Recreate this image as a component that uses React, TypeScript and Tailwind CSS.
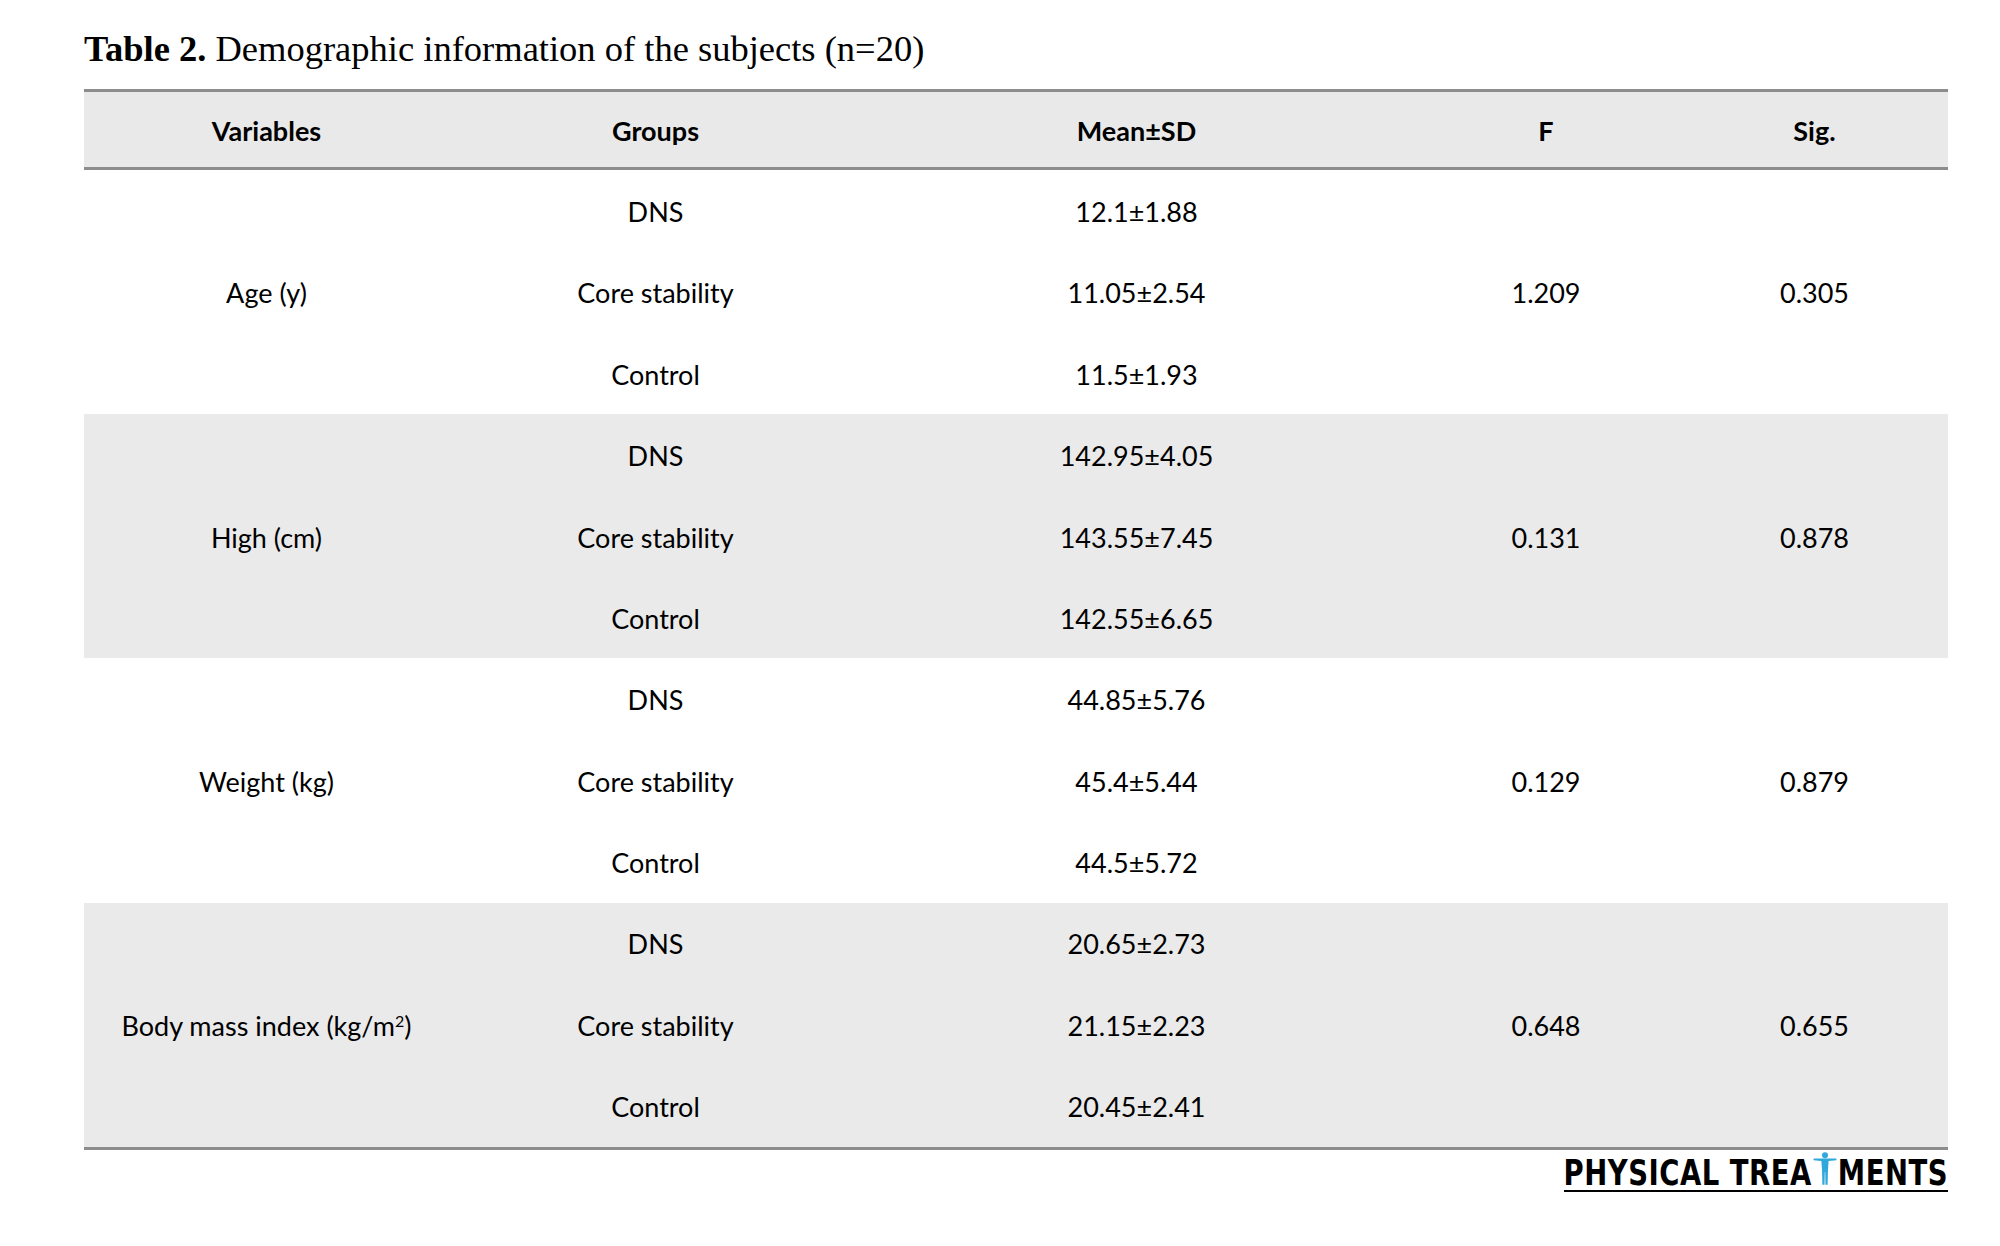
import React from "react";

const cols = "grid grid-cols-[365px_413px_549px_270px_267px]";
const cell = "flex items-center justify-center pt-[3px]";

type Group = {
  label: React.ReactNode;
  rows: [string, string][];
  f: string;
  sig: string;
  shaded: boolean;
};

const groups: Group[] = [
  {
    label: "Age (y)",
    rows: [
      ["DNS", "12.1±1.88"],
      ["Core stability", "11.05±2.54"],
      ["Control", "11.5±1.93"],
    ],
    f: "1.209",
    sig: "0.305",
    shaded: false,
  },
  {
    label: "High (cm)",
    rows: [
      ["DNS", "142.95±4.05"],
      ["Core stability", "143.55±7.45"],
      ["Control", "142.55±6.65"],
    ],
    f: "0.131",
    sig: "0.878",
    shaded: true,
  },
  {
    label: "Weight (kg)",
    rows: [
      ["DNS", "44.85±5.76"],
      ["Core stability", "45.4±5.44"],
      ["Control", "44.5±5.72"],
    ],
    f: "0.129",
    sig: "0.879",
    shaded: false,
  },
  {
    label: (
      <span className="relative">
        Body mass index (kg/m
        <span className="relative -top-[9px] text-[16px] leading-none">2</span>)
      </span>
    ),
    rows: [
      ["DNS", "20.65±2.73"],
      ["Core stability", "21.15±2.23"],
      ["Control", "20.45±2.41"],
    ],
    f: "0.648",
    sig: "0.655",
    shaded: true,
  },
];

function Figure() {
  return (
    <svg width="24" height="33" viewBox="0 0 24 33" className="mx-[1px]">
      <circle cx="12" cy="3.2" r="3" fill="#2fa8dc" />
      <path
        d="M0.5 7.2 Q0.5 6.6 1.2 6.6 L22.8 6.6 Q23.5 6.6 23.5 7.2 L23.5 8.2 L15.6 8.9 L15 17.5 L14.6 32.8 L12.5 32.8 L12.2 20 L11.8 20 L11.5 32.8 L9.4 32.8 L9 17.5 L8.4 8.9 L0.5 8.2 Z"
        fill="#2fa8dc"
      />
    </svg>
  );
}

export default function App() {
  return (
    <div className="w-[2000px] h-[1246px] bg-white text-black">
      <div className="pl-[84px] pt-[27px] h-[89px] text-[36.5px] leading-[44px] [font-family:'Liberation_Serif',serif] whitespace-nowrap">
        <span className="font-bold">Table 2.</span> Demographic information of the subjects (n=20)
      </div>

      <div className="ml-[84px] w-[1864px] [font-family:Lato,sans-serif] text-[27px]">
        <div className={`${cols} h-[81px] bg-[#e9e9e9] border-t-[3px] border-b-[3px] border-[#8d8d8d] font-bold items-center text-center`}>
          <div className={cell}>Variables</div>
          <div className={cell}>Groups</div>
          <div className={cell}>Mean±SD</div>
          <div className={cell}>F</div>
          <div className={cell}>Sig.</div>
        </div>

        {groups.map((g, i) => (
          <div
            key={i}
            className={`${cols} grid-rows-[81.4px_81.4px_81.4px] text-center ${g.shaded ? "bg-[#eaeaea]" : "bg-white"}`}
          >
            <div className={`row-span-3 ${cell}`}>{g.label}</div>
            <div className={`col-start-2 row-start-1 ${cell}`}>{g.rows[0][0]}</div>
            <div className={`col-start-3 row-start-1 ${cell}`}>{g.rows[0][1]}</div>
            <div className={`col-start-4 row-start-1 row-span-3 ${cell}`}>{g.f}</div>
            <div className={`col-start-5 row-start-1 row-span-3 ${cell}`}>{g.sig}</div>
            <div className={`col-start-2 row-start-2 ${cell}`}>{g.rows[1][0]}</div>
            <div className={`col-start-3 row-start-2 ${cell}`}>{g.rows[1][1]}</div>
            <div className={`col-start-2 row-start-3 ${cell}`}>{g.rows[2][0]}</div>
            <div className={`col-start-3 row-start-3 ${cell}`}>{g.rows[2][1]}</div>
          </div>
        ))}
        <div className="h-[3px] bg-[#8d8d8d]" />

        <div className="flex justify-end mt-[1px]">
          <div className="flex flex-col items-stretch">
            <div className="flex items-end h-[34px] [font-family:'DejaVu_Sans',sans-serif] font-bold text-[27.5px] leading-[20px] tracking-[0.5px]">
              <span className="inline-block scale-y-[1.3] origin-bottom">PHYSICAL TREA</span>
              <Figure />
              <span className="inline-block scale-y-[1.3] origin-bottom">MENTS</span>
            </div>
            <div className="h-[2px] bg-black mt-[5px]" />
          </div>
        </div>
      </div>
    </div>
  );
}
